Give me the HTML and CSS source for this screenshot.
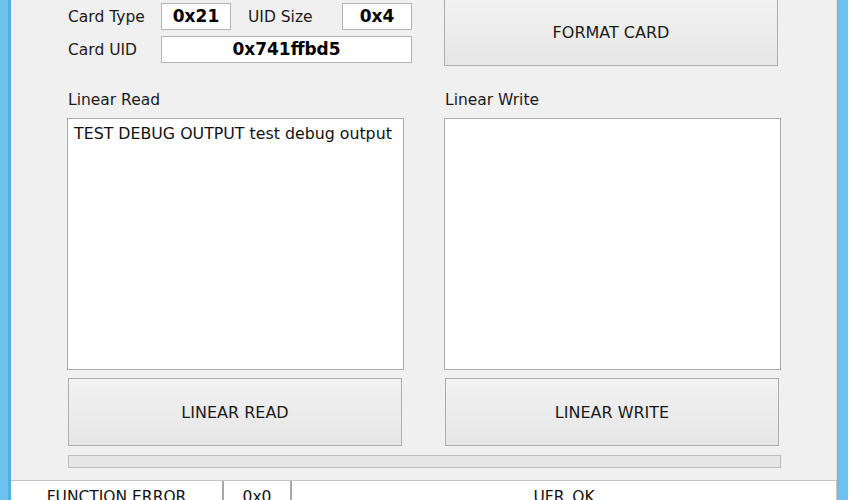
FILE: index.html
```html
<!DOCTYPE html>
<html lang="en">
<head>
    <meta charset="UTF-8">
    <title>uFR Linear Read / Write</title>
    <link rel="stylesheet" href="styles.css">
</head>
<body>
    <div class="window">
        <div class="client">
            <div class="top">
                <div class="card-info">
                    <div class="info-row">
                        <span class="label label-first">Card Type</span>
                        <span class="value small">0x21</span>
                        <span class="label label-second">UID Size</span>
                        <span class="value small">0x4</span>
                    </div>
                    <div class="info-row">
                        <span class="label label-first">Card UID</span>
                        <span class="value wide">0x741ffbd5</span>
                    </div>
                </div>
                <button class="btn format-btn">FORMAT CARD</button>
            </div>

            <div class="panes">
                <div class="pane">
                    <div class="pane-title">Linear Read</div>
                    <div class="text-area">TEST DEBUG OUTPUT test debug output</div>
                    <button class="btn pane-btn">LINEAR READ</button>
                </div>
                <div class="pane">
                    <div class="pane-title">Linear Write</div>
                    <div class="text-area"></div>
                    <button class="btn pane-btn">LINEAR WRITE</button>
                </div>
            </div>

            <div class="progress"></div>
        </div>

        <div class="statusbar">
            <div class="status-cell cell-func">FUNCTION ERROR</div>
            <div class="status-cell cell-code">0x0</div>
            <div class="status-cell cell-msg">UFR_OK</div>
        </div>
    </div>
</body>
</html>
```

FILE: styles.css
```css
* {
    box-sizing: border-box;
}

body {
    margin: 0;
    height: 100vh;
    background-color: #ffffff;
    font-family: 'DejaVu Sans', Verdana, sans-serif;
    color: #111;
    overflow: hidden;
}

/* window frame: light blue edge with a darker inner stripe */
.window {
    width: 848px;
    height: 100%;
    background-color: #58acde;
    border-left: 8px solid #6cc1ef;
    border-right: 11px solid #6cc1ef;
    padding-left: 3px;
    display: flex;
    flex-direction: column;
}

.client {
    flex-shrink: 0;
    background-color: #f0f0f0;
    padding-left: 56px;
    height: 480px;
    border-right: 1px solid #dcdcdc;
}

/* top block */
.top {
    display: flex;
    margin-top: -2px;
}

.card-info {
    width: 345px;
    padding-top: 5px;
}

.info-row {
    display: flex;
    align-items: center;
    height: 27px;
    margin-bottom: 6px;
}

.label {
    font-size: 15.5px;
    color: #1a1a1a;
}

.label-first {
    width: 94px;
    padding-left: 1px;
}

.label-second {
    width: 111px;
    padding-left: 17px;
}

.value {
    height: 27px;
    background-color: #fff;
    border: 1px solid #b4b4b4;
    font-weight: bold;
    font-size: 17px;
    text-align: center;
    line-height: 25px;
    color: #000;
}

.value.small {
    width: 70px;
}

.value.wide {
    width: 251px;
}

.btn {
    font-family: 'DejaVu Sans', Verdana, sans-serif;
    font-size: 16px;
    color: #1a1a1a;
    border: 1px solid #adadad;
    background: linear-gradient(#f2f2f2, #e6e6e6);
    padding: 0;
}

.format-btn {
    width: 334px;
    height: 68px;
    margin-left: 32px;
}

/* panes */
.panes {
    display: flex;
    gap: 40px;
    margin-top: 22px;
}

.pane {
    width: 337px;
    display: flex;
    flex-direction: column;
}

.pane-title {
    font-size: 15.5px;
    height: 18px;
    line-height: 18px;
    padding-left: 1px;
    margin-bottom: 9px;
    color: #1a1a1a;
}

.text-area {
    height: 252px;
    background-color: #fff;
    border: 1px solid #ababab;
    padding: 5px 6px;
    font-size: 15.8px;
    color: #111;
}

.pane-btn {
    width: 334px;
    height: 68px;
    margin: 8px 0 0 1px;
}

.progress {
    width: 713px;
    height: 13px;
    margin: 9px 0 0 1px;
    background-color: #e6e6e6;
    border: 1px solid #bcbcbc;
}

/* status bar */
.statusbar {
    display: flex;
    background-color: #fff;
    border-top: 1px solid #c4c4c4;
    height: 30px;
    font-size: 15.5px;
    color: #111;
}

.status-cell {
    text-align: center;
    padding-top: 7px;
}

.cell-func {
    width: 211px;
}

.cell-code {
    width: 68px;
    border-left: 2px solid #a8a8a8;
}

.cell-msg {
    flex: 1;
    border-left: 2px solid #a8a8a8;
    border-right: 1px solid #c4c4c4;
}
```
